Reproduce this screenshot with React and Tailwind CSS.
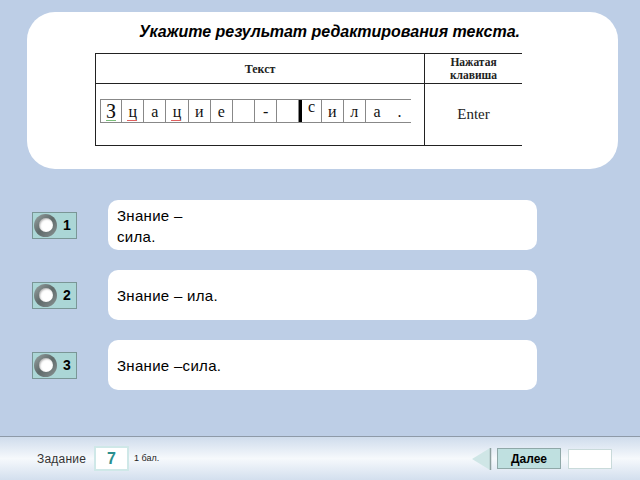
const cells = [
  { ch: "З", big: true },
  { ch: "ц", mark: "red" },
  { ch: "а" },
  { ch: "ц", mark: "red" },
  { ch: "и" },
  { ch: "е" },
  { ch: "" },
  { ch: "-" },
  { ch: "" },
  { ch: "с", thick: true, up: true },
  { ch: "и" },
  { ch: "л" },
  { ch: "а", noRight: true },
  { ch: ".", last: true },
];

const answers = [
  { n: 1, text: ["Знание –", "сила."] },
  { n: 2, text: ["Знание – ила."] },
  { n: 3, text: ["Знание –сила."] },
];

function Radio({ n }) {
  return (
    <div className="w-[45px] h-[27px] bg-[#abd6d6] border border-[#7a9696] flex items-center pl-[1px] gap-[6px]">
      <div className="w-[23px] h-[23px] rounded-full bg-gradient-to-br from-[#9aa4a4] via-[#5f6a6a] to-[#8a9494] flex items-center justify-center">
        <div className="w-[14px] h-[14px] rounded-full bg-white shadow-[inset_1px_1px_2px_rgba(0,0,0,0.3)]" />
      </div>
      <span className="text-[14px] font-bold text-black">{n}</span>
    </div>
  );
}

export default function App() {
  return (
    <div
      className="w-[640px] h-[480px] bg-[#bdcee6] flex flex-col overflow-hidden"
      style={{ fontFamily: '"Liberation Sans", Arial, sans-serif' }}
    >
      {/* question card */}
      <div className="mt-[12px] ml-[27px] w-[591px] h-[157px] bg-white rounded-[28px] pt-[11px]">
        <p className="text-[16px] leading-[18px] font-bold italic text-black text-center pl-[14px]">
          Укажите результат редактирования текста.
        </p>
        <div
          className="mt-[12px] ml-[68px] w-[427px] border-t border-b border-l border-[#222] flex"
          style={{ fontFamily: '"Liberation Serif", "Times New Roman", serif' }}
        >
          <div className="w-[329px] border-r border-[#222] flex flex-col">
            <div className="h-[30px] border-b border-[#222] flex items-center justify-center text-[12px] font-bold text-[#222]">
              Текст
            </div>
            <div className="h-[61px] pt-[15px] pl-[4px]">
              <div className="flex h-[24px] border-t border-b border-[#888] w-[311px]">
                {cells.map((c, i) => (
                  <div
                    key={i}
                    className={
                      "relative h-full flex justify-center text-[#111] " +
                      (c.last ? "w-[23px] " : "w-[22.3px] ") +
                      (c.thick ? "border-l-[3px] border-l-black " : i === 0 ? "border-l border-l-[#888] " : "") +
                      (c.noRight || c.last ? "" : "border-r border-r-[#888] ") +
                      (c.big ? "text-[20px] leading-[22px] items-end" : c.up ? "text-[16px] leading-[14px] items-start" : "text-[16px] leading-[20px] items-end")
                    }
                  >
                    {c.ch}
                    {c.big && <span className="absolute bottom-[1px] left-[5px] w-[10px] h-[1px] bg-[#7bbf7b]" />}
                    {c.mark && <span className="absolute bottom-[1px] left-[5px] w-[10px] h-[1px] bg-[#e06060]" />}
                  </div>
                ))}
              </div>
            </div>
          </div>
          <div className="flex-1 flex flex-col">
            <div className="h-[30px] border-b border-[#222] flex flex-col items-center justify-center text-[11.5px] leading-[13px] font-bold text-[#222]">
              <span>Нажатая</span>
              <span>клавиша</span>
            </div>
            <div className="h-[61px] flex items-center justify-center text-[15px] text-[#222]">
              Enter
            </div>
          </div>
        </div>
      </div>

      {/* answers */}
      <div className="mt-[31px] flex flex-col gap-[20px]">
        {answers.map((a) => (
          <div key={a.n} className="flex items-center">
            <div className="ml-[32px]">
              <Radio n={a.n} />
            </div>
            <div className="ml-[31px] w-[429px] h-[50px] bg-white rounded-[10px] flex flex-col justify-center pl-[9px] pt-[1px] text-[15px] leading-[21px] tracking-[0.3px] text-black">
              {a.text.map((t, i) => (
                <span key={i}>{t}</span>
              ))}
            </div>
          </div>
        ))}
      </div>

      {/* bottom bar */}
      <div className="mt-auto h-[44px] border-t border-[#8e9aa8] bg-gradient-to-b from-[#cfdcec] via-[#f6f9fc] to-[#d3dfee] flex items-center">
        <span className="ml-[37px] text-[12px] text-[#333] tracking-[0.2px]">Задание</span>
        <div className="ml-[8px] w-[35px] h-[25px] bg-white border-2 border-[#cfe8e8] flex items-center justify-center text-[16px] font-bold text-[#2a8f8f]">
          7
        </div>
        <span className="ml-[5px] text-[9px] text-[#222]">1 бал.</span>
        <svg className="ml-auto" width="21" height="24" viewBox="0 0 21 24">
          <polygon points="1,12 19,1 19,23" fill="#cfe6e6" />
          <line x1="19.5" y1="1" x2="19.5" y2="23" stroke="#8ea0a0" strokeWidth="1.5" />
        </svg>
        <div className="ml-[5px] w-[64px] h-[21px] bg-[#bfe0e0] border border-[#8fa8a8] flex items-center justify-center text-[12px] font-bold text-black">
          Далее
        </div>
        <div className="ml-[7px] mr-[28px] w-[44px] h-[20px] bg-white border border-[#c9dada]" />
      </div>
    </div>
  );
}
